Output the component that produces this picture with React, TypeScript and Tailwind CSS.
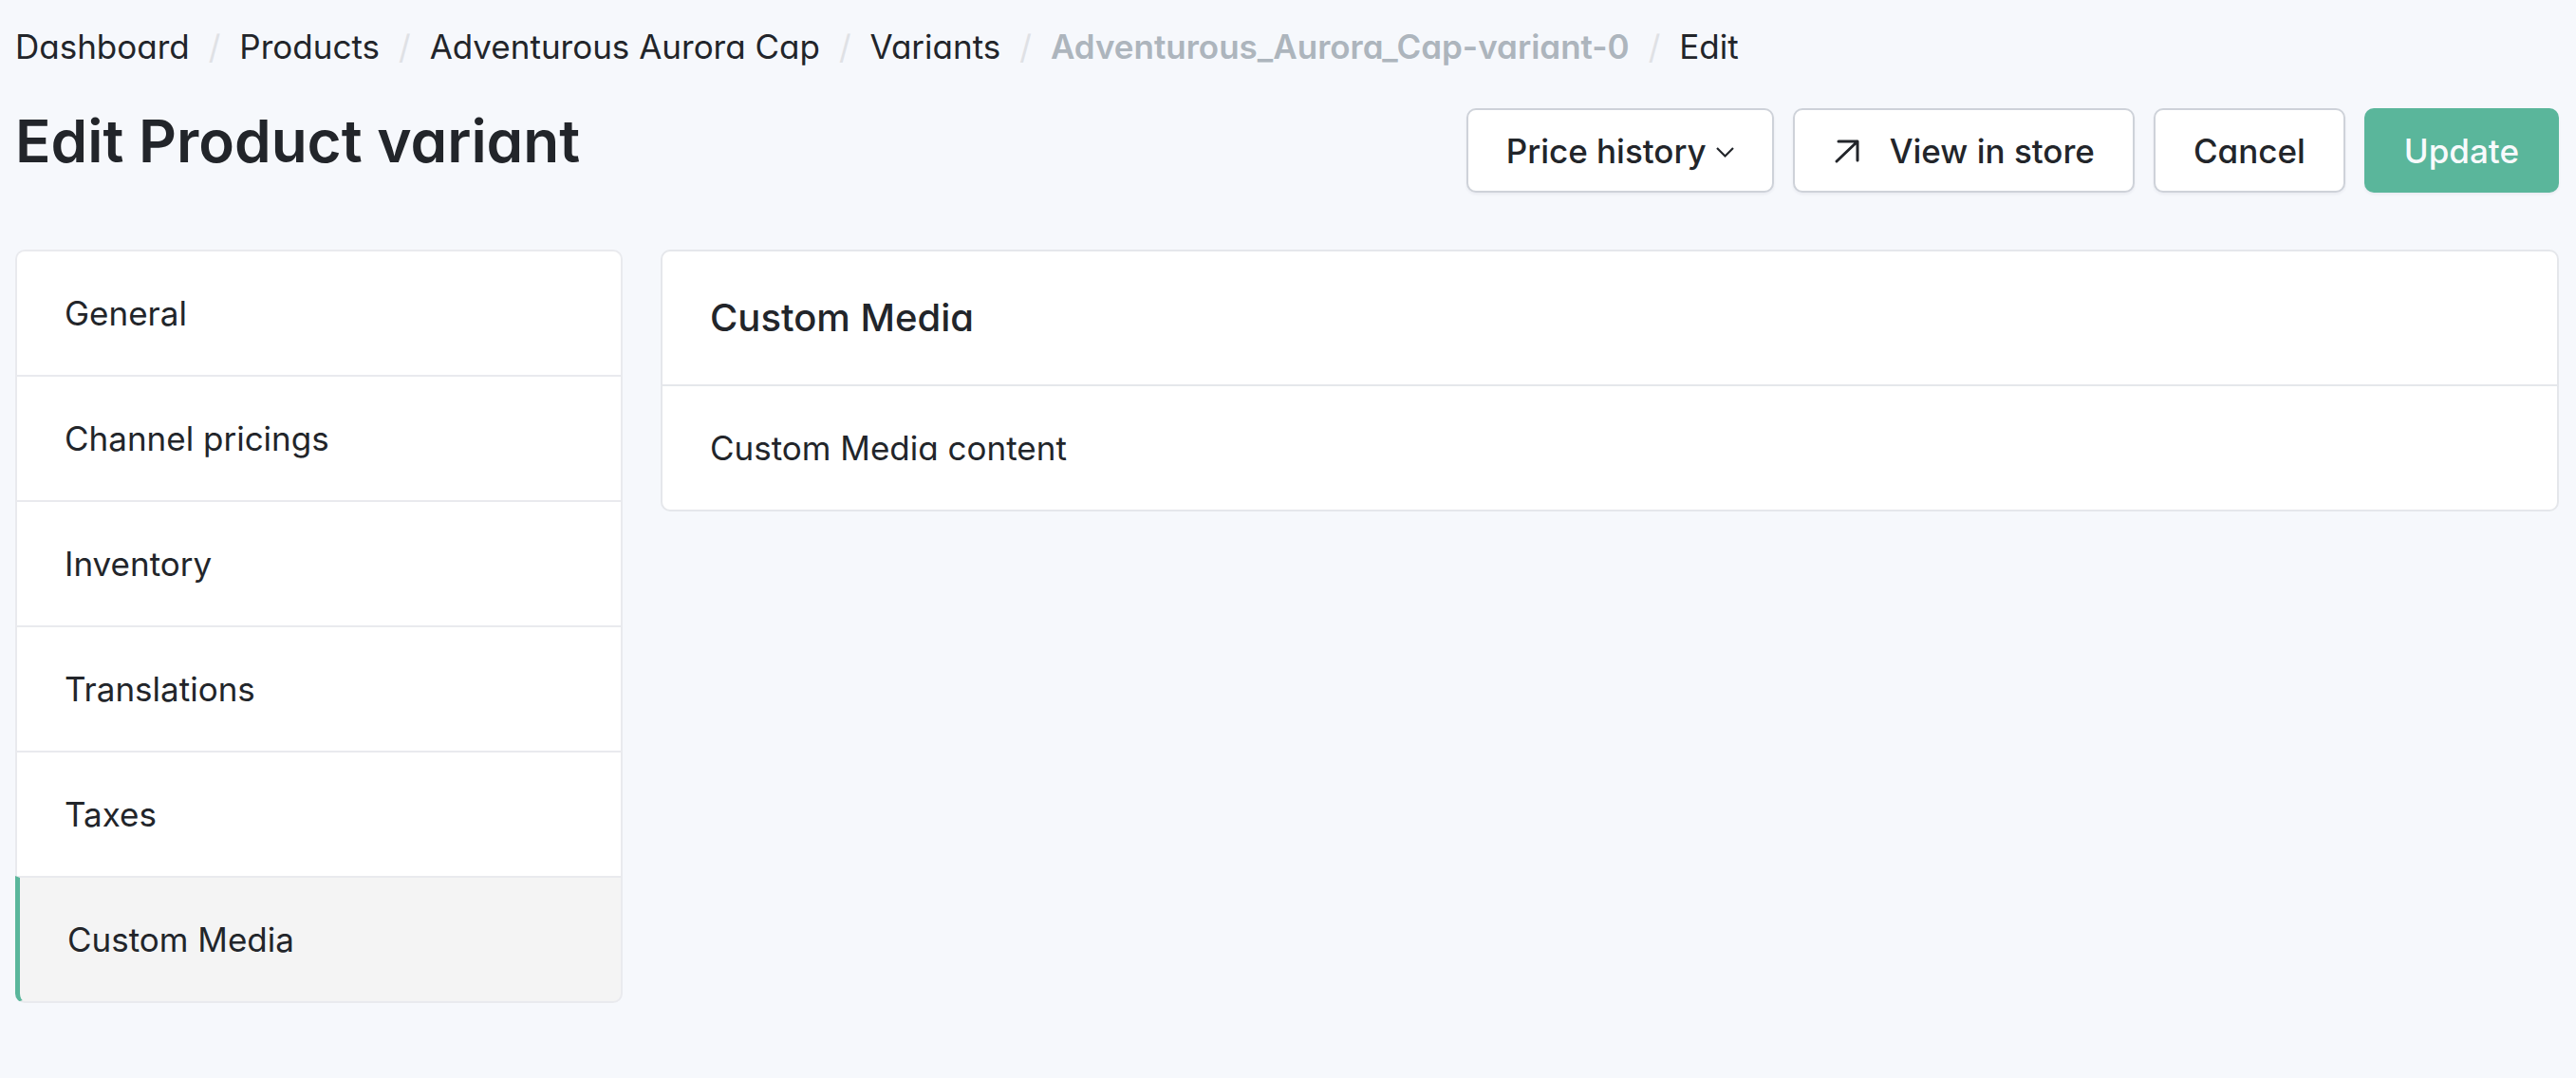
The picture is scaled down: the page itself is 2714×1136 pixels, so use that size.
import React from "react";

const crumbs = ["Dashboard", "Products", "Adventurous Aurora Cap", "Variants", "Adventurous_Aurora_Cap-variant-0", "Edit"];
const tabs = ["General", "Channel pricings", "Inventory", "Translations", "Taxes", "Custom Media"];

const button =
  "flex h-[89px] items-center rounded-[10px] border-2 border-[#ced2d9] bg-white px-10 font-medium shadow-[0_2px_3px_rgba(30,40,60,0.06)]";

function Crumb({ label, index }: { label: string; index: number }) {
  const text =
    index === 4 ? (
      <span className="font-semibold text-[#adb5bd]">{label}</span>
    ) : index === 5 ? (
      <span aria-current="page">{label}</span>
    ) : (
      <a href="#">{label}</a>
    );
  return (
    <li className="flex">
      {index > 0 && <span className="px-5 text-[#dfe1e5]">/</span>}
      {text}
    </li>
  );
}

function Tab({ label, active }: { label: string; active: boolean }) {
  return (
    <button
      role="tab"
      aria-selected={active}
      className={
        "border-[#e9eaee] border-x-2 border-t-2 px-[50px] py-10 text-left first:rounded-t-[10px] last:rounded-b-[10px] last:border-b-2 " +
        (active ? "border-l-[5px] border-l-[#5ab69b] bg-[#f4f4f4]" : "bg-white")
      }
    >
      {label}
    </button>
  );
}

export default function App() {
  return (
    <div className="min-h-screen bg-[#f6f8fc] pl-4 pr-[18px] pt-6 font-['Inter',sans-serif] text-[35px] leading-[50px] text-[#22252a] [font-feature-settings:'cv11']">
      <nav aria-label="Breadcrumb">
        <ol className="flex">
          {crumbs.map((label, index) => (
            <Crumb key={label} label={label} index={index} />
          ))}
        </ol>
      </nav>
      <header className="mt-10 flex items-start justify-between">
        <h1 className="text-[62px] font-semibold leading-[70px]">Edit Product variant</h1>
        <div className="flex gap-5">
          <button className={button}>
            Price history
            <svg className="ml-2.5 h-5 w-[19px]" viewBox="0 0 19 20" fill="none" stroke="currentColor" strokeWidth="2.2">
              <path d="M1 7l8.500 8.500L18 7" />
            </svg>
          </button>
          <a href="#" className={button}>
            <svg className="mr-7 size-8" viewBox="0 0 32 32" fill="none" stroke="currentColor" strokeWidth="3" strokeLinecap="round" strokeLinejoin="round">
              <path d="M4 27L26 6M6 6h20v20" />
            </svg>
            View in store
          </a>
          <a href="#" className={button}>Cancel</a>
          <button className="h-[89px] rounded-[10px] bg-[#5ab69b] px-[42px] font-medium text-[#f8fafc] shadow-[0_2px_3px_rgba(30,40,60,0.06)] [font-feature-settings:normal]">
            Update
          </button>
        </div>
      </header>
      <div className="mt-[60px] flex items-start gap-10">
        <div role="tablist" aria-label="Sections" aria-orientation="vertical" className="flex w-[640px] shrink-0 flex-col [font-feature-settings:normal]">
          {tabs.map((tab) => (
            <Tab key={tab} label={tab} active={tab === "Custom Media"} />
          ))}
        </div>
        <section className="grow rounded-[10px] border-2 border-[#e5e7eb] bg-white">
          <h2 className="border-b-2 border-[#e5e7eb] px-[50px] py-11 text-[40px] font-medium leading-[52px]">Custom Media</h2>
          <p className="px-[50px] py-10">Custom Media content</p>
        </section>
      </div>
    </div>
  );
}
